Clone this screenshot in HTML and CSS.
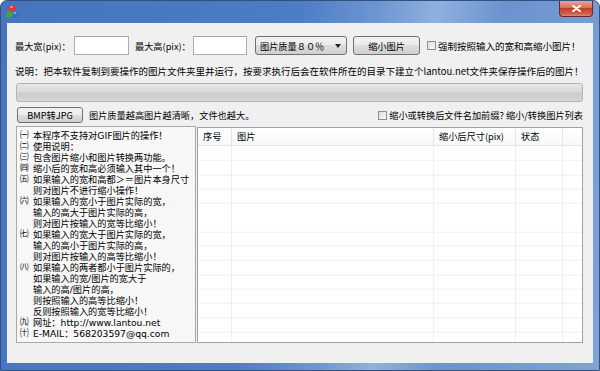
FILE: index.html
```html
<!DOCTYPE html>
<html lang="zh-CN">
<head>
  <meta charset="UTF-8" />
  <title>图片缩小转换</title>
  <link rel="stylesheet" href="styles.css">
</head>
<body>
  <div class="window">
    <div class="titlebar">
      <svg class="app-icon" width="13" height="13" viewBox="0 0 13 13">
        <rect x="3" y="0.5" width="6.5" height="6" rx="1.5" fill="#e0392b"/>
        <rect x="4" y="1.2" width="3" height="1.6" rx="0.8" fill="#f7a59a"/>
        <rect x="0.5" y="6" width="6" height="6.5" rx="1.5" fill="#3aa83a"/>
        <rect x="6.5" y="6.5" width="6" height="6" rx="1.5" fill="#2d6cd2"/>
        <rect x="7.4" y="7.2" width="3" height="1.5" rx="0.7" fill="#9ec0f2"/>
      </svg>
      <div class="close-btn">
        <svg width="9" height="7" viewBox="0 0 9 7">
          <path d="M1 0.8 L8 6.2 M8 0.8 L1 6.2" stroke="#fff" stroke-width="2" stroke-linecap="round"/>
        </svg>
      </div>
    </div>

    <div class="client">
      <div class="row row--top">
        <span class="label label--w">最大宽(pix)：</span>
        <input class="textbox" type="text">
        <span class="label label--h">最大高(pix)：</span>
        <input class="textbox textbox--h" type="text">
        <div class="combo">
          <span>图片质量８０％</span>
          <span class="combo__arrow"></span>
        </div>
        <button class="btn btn--shrink">缩小图片</button>
        <span class="check"></span>
        <span class="check-text check-text--big">强制按照输入的宽和高缩小图片！</span>
      </div>

      <div class="row row--info">说明：把本软件复制到要操作的图片文件夹里并运行，按要求执行后会在软件所在的目录下建立个lantou.net文件夹保存操作后的图片！</div>

      <div class="progress"></div>

      <div class="row row--mid">
        <button class="btn btn--bmp">BMP转JPG</button>
        <span class="hint">图片质量越高图片越清晰，文件也越大。</span>
        <span class="check check--prefix"></span>
        <span class="check-text">缩小或转换后文件名加前缀? 缩小/转换图片列表</span>
      </div>

      <div class="panels">
        <div class="notes">
          <p class="note"><span class="num">㈠</span>本程序不支持对GIF图片的操作！</p>
          <p class="note"><span class="num">㈡</span>使用说明：</p>
          <p class="note"><span class="num">㈢</span>包含图片缩小和图片转换两功能。</p>
          <p class="note"><span class="num">㈣</span>缩小后的宽和高必须输入其中一个！</p>
          <p class="note"><span class="num">㈤</span>如果输入的宽和高都＞＝图片本身尺寸</p>
          <p class="note note--cont">则对图片不进行缩小操作！</p>
          <p class="note"><span class="num">㈥</span>如果输入的宽小于图片实际的宽，</p>
          <p class="note note--cont">输入的高大于图片实际的高，</p>
          <p class="note note--cont">则对图片按输入的宽等比缩小！</p>
          <p class="note"><span class="num">㈦</span>如果输入的宽大于图片实际的宽，</p>
          <p class="note note--cont">输入的高小于图片实际的高，</p>
          <p class="note note--cont">则对图片按输入的高等比缩小！</p>
          <p class="note"><span class="num">㈧</span>如果输入的两者都小于图片实际的，</p>
          <p class="note note--cont">如果输入的宽/图片的宽大于</p>
          <p class="note note--cont">输入的高/图片的高，</p>
          <p class="note note--cont">则按照输入的高等比缩小！</p>
          <p class="note note--cont">反则按照输入的宽等比缩小！</p>
          <p class="note"><span class="num">㈨</span>网址：http://www.lantou.net</p>
          <p class="note"><span class="num">㈩</span>E-MAIL：568203597@qq.com</p>
        </div>

        <div class="listview">
          <div class="listview__head">
            <div class="col">序号</div>
            <div class="col">图片</div>
            <div class="col">缩小后尺寸(pix)</div>
            <div class="col">状态</div>
            <div class="col"></div>
          </div>
          <div class="listview__body">
            <div class="col"></div>
            <div class="col"></div>
            <div class="col"></div>
            <div class="col"></div>
            <div class="col"></div>
          </div>
        </div>
      </div>
    </div>
  </div>
</body>
</html>
```

FILE: styles.css
```css
html, body {
  margin: 0;
  height: 100%;
}

body {
  font-family: "Noto Sans CJK SC", "Liberation Sans", sans-serif;
  font-size: 9.2px;
  color: #000;
  background: #fff;
}

.window {
  width: 600px;
  height: 371px;
  box-sizing: border-box;
  border: 1px solid #34507c;
  border-radius: 7px 7px 0 0;
  background: linear-gradient(100deg, #4675c0 0%, #4c7cc6 45%, #6f98d4 58%, #8fb1e0 66%, #6a93cf 76%, #7da3d9 100%);
  display: flex;
  flex-direction: column;
  overflow: hidden;
}

/* заголовок окна */
.titlebar {
  height: 22px;
  display: flex;
  justify-content: space-between;
  align-items: flex-start;
}

.app-icon {
  margin: 4px 0 0 5px;
}

.close-btn {
  width: 34px;
  height: 16px;
  margin-right: 6px;
  box-sizing: border-box;
  border: 1px solid #6a2a22;
  border-top: none;
  border-radius: 0 0 4px 4px;
  background: linear-gradient(#e7a596 0%, #d5705f 45%, #c2402a 50%, #cf5f4c 85%, #e08a74 100%);
  display: flex;
  align-items: center;
  justify-content: center;
}

.client {
  flex: 1;
  margin: 0 6px 7px;
  padding: 13px 10px 0 9px;
  background: #f0f0f0;
  display: flex;
  flex-direction: column;
}

.row {
  display: flex;
  align-items: center;
  white-space: nowrap;
}

.row--top {
  height: 19px;
  margin-left: -1px;
}

.label {
  display: block;
}

.label--w {
  width: 59px;
}

.label--h {
  width: 58px;
  margin-left: 6px;
}

.textbox {
  width: 55px;
  height: 19px;
  box-sizing: border-box;
  margin: 0;
  padding: 0 2px;
  border: 1px solid #abadb3;
  border-top-color: #9fa3aa;
  background: #fff;
}

.textbox--h {
  width: 54px;
}

.combo {
  width: 92px;
  height: 19px;
  box-sizing: border-box;
  margin-left: 8px;
  padding: 0 5px 0 4px;
  border: 1px solid #707070;
  border-radius: 3px;
  background: linear-gradient(#f2f2f2 0%, #ebebeb 50%, #dddddd 50%, #cfcfcf 100%);
  display: flex;
  align-items: center;
  justify-content: space-between;
}

.combo__arrow {
  width: 0;
  height: 0;
  border-left: 3px solid transparent;
  border-right: 3px solid transparent;
  border-top: 4px solid #222;
}

.btn {
  margin: 0;
  padding: 0;
  box-sizing: border-box;
  border: 1px solid #707070;
  border-radius: 3px;
  background: linear-gradient(#f2f2f2 0%, #ebebeb 50%, #dddddd 50%, #cfcfcf 100%);
  font-family: inherit;
  font-size: 9.2px;
  color: #000;
}

.btn--shrink {
  width: 67px;
  height: 19px;
  margin-left: 6px;
}

.check {
  width: 9px;
  height: 9px;
  box-sizing: border-box;
  margin-left: 7px;
  border: 1px solid #8f8f8f;
  background: linear-gradient(135deg, #dcdcdc, #f8f8f8);
}

.check-text {
  margin-left: 2px;
}

.check-text--big {
  font-size: 9.5px;
}

.row--info {
  height: 13px;
  margin-top: 10px;
  margin-left: -1px;
  line-height: 13px;
  font-size: 9.5px;
}

.progress {
  height: 19px;
  margin-top: 5px;
  box-sizing: border-box;
  border: 1px solid #b4b4b4;
  border-radius: 3px;
  background: linear-gradient(#e8e8e8 0%, #d9d9d9 45%, #cccccc 55%, #d6d6d6 100%);
}

.row--mid {
  height: 16px;
  margin-top: 5px;
}

.btn--bmp {
  width: 66px;
  height: 16px;
  margin-left: 1px;
}

.hint {
  margin-left: 6px;
}

.check--prefix {
  margin-left: auto;
}

.panels {
  height: 217px;
  margin-top: 3px;
  display: flex;
  align-items: flex-start;
}

/* левая панель с пояснениями */
.notes {
  width: 180px;
  height: 217px;
  box-sizing: border-box;
  padding: 3px 0 0 3px;
  border: 1px solid #a9a9a9;
  background: #f7f7f7;
  font-family: "DejaVu Sans", "Noto Sans CJK SC", sans-serif;
  font-size: 9.2px;
  overflow: hidden;
}

.note {
  margin: 0;
  height: 11px;
  line-height: 11px;
  white-space: nowrap;
  display: flex;
}

.note--cont {
  padding-left: 13px;
}

.num {
  width: 13px;
  flex-shrink: 0;
  font-size: 8.6px;
}

.listview {
  width: 386px;
  height: 216px;
  margin: 1px 0 0 1px;
  box-sizing: border-box;
  border: 1px solid #9da1a7;
  background: #fff;
  display: flex;
  flex-direction: column;
}

.listview__head,
.listview__body {
  display: grid;
  grid-template-columns: 34px 202px 82px 47px 1fr;
}

.listview__head {
  height: 18px;
  box-sizing: border-box;
  border-bottom: 1px solid #e3e5e8;
  background: linear-gradient(#ffffff, #f6f7f9);
}

.listview__head .col {
  padding-left: 5px;
  line-height: 17px;
  border-right: 1px solid #e3e5e8;
  white-space: nowrap;
}

.listview__body {
  flex: 1;
  background: repeating-linear-gradient(#fff 0, #fff 13.3px, #efefef 13.3px, #efefef 14.3px);
  background-position: 0 0.7px;
}

.listview__body .col {
  border-right: 1px solid #efefef;
}

.listview__head .col:last-child,
.listview__body .col:last-child {
  border-right: none;
}
```
